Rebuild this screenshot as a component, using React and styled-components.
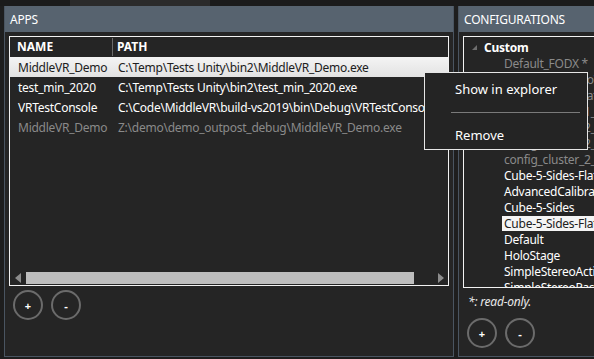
import React from "react";
import styled, { createGlobalStyle } from "styled-components";

const GlobalStyle = createGlobalStyle`
	html, body {
		margin: 0;
		padding: 0;
		background: #1e1e1e;
		overflow: hidden;
	}
	body {
		font-family: "Noto Sans", "Open Sans", sans-serif;
		font-size: 12px;
		color: #ffffff;
	}
`;

const Window = styled.div`
	position: relative;
	width: 594px;
	height: 359px;
	overflow: hidden;
	display: flex;
	flex-direction: column;
`;

const TopStrip = styled.div`
	height: 6px;
	display: flex;
	flex: none;
`;

const StripSeg = styled.div`
	width: ${p => p.w}px;
	background: ${p => p.c};
`;

const Panels = styled.div`
	display: flex;
	gap: 4px;
	padding-left: 4px;
	height: 351px;
`;

const Panel = styled.section`
	flex: none;
	width: ${p => p.w}px;
	box-sizing: border-box;
	display: flex;
	flex-direction: column;
	background: #252525;
	border: 1px solid #4a5561;
	border-top: none;
`;

const PanelHeader = styled.div`
	height: 26px;
	flex: none;
	background: #57636f;
	display: flex;
	align-items: center;
	padding-left: 5px;
	font-size: 12px;
	letter-spacing: -0.2px;
	color: #ffffff;
`;

const PanelBody = styled.div`
	padding: 4px 4px 0 4px;
	display: flex;
	flex-direction: column;
`;

const Box = styled.div`
	box-sizing: border-box;
	height: ${p => p.h}px;
	border: 1px solid #f2f2f2;
	display: flex;
	flex-direction: column;
	overflow: hidden;
`;

const HeadRow = styled.div`
	height: 20px;
	display: flex;
	align-items: center;
	font-weight: bold;
	flex: none;
`;

const HeadCell = styled.div`
	width: ${p => (p.w ? `${p.w}px` : "auto")};
	box-sizing: border-box;
	padding-left: ${p => p.pad}px;
	height: 18px;
	line-height: 18px;
	border-right: ${p => (p.divider ? "1px solid #6a6a6a" : "none")};
	white-space: nowrap;
`;

const Rows = styled.div`
	flex: 1;
	display: flex;
	flex-direction: column;
`;

const Row = styled.div`
	height: 20px;
	display: flex;
	align-items: center;
	white-space: nowrap;
	color: ${p => (p.selected ? "#202020" : p.dim ? "#8a8a8a" : "#ffffff")};
	background: ${p =>
		p.selected ? "linear-gradient(#f4f4f4, #e2e2e2)" : "transparent"};
	letter-spacing: -0.25px;
`;

const Cell = styled.div`
	width: ${p => (p.w ? `${p.w}px` : "auto")};
	box-sizing: border-box;
	padding-left: ${p => p.pad}px;
	flex: none;
`;

const HScroll = styled.div`
	height: 12px;
	margin-bottom: 1px;
	display: flex;
	align-items: center;
	padding: 0 4px 0 5px;
	gap: 5px;
`;

const Arrow = styled.div`
	width: 0;
	height: 0;
	border-top: 5px solid transparent;
	border-bottom: 5px solid transparent;
	${p =>
		p.dir === "left"
			? "border-right: 6px solid #8c8c8c;"
			: "border-left: 6px solid #8c8c8c;"}
`;

const Track = styled.div`
	flex: 1;
	height: 12px;
	display: flex;
	padding-right: 19px;
`;

const Thumb = styled.div`
	flex: 1;
	background: #bdbdbd;
`;

const ButtonRow = styled.div`
	display: flex;
	gap: 8px;
	padding-left: 4px;
	margin-top: ${p => p.top}px;
`;

const RoundButton = styled.button`
	width: 30px;
	height: 30px;
	box-sizing: border-box;
	border-radius: 50%;
	border: 2px solid #6b6b6b;
	background: transparent;
	color: #ffffff;
	font-family: "Noto Sans", sans-serif;
	font-size: 11px;
	font-weight: bold;
	padding: 0;
	display: flex;
	align-items: center;
	justify-content: center;
`;

const Tree = styled.div`
	padding-top: 2px;
	display: flex;
	flex-direction: column;
`;

const TreeRow = styled.div`
	height: 16px;
	display: flex;
	align-items: center;
	white-space: nowrap;
	padding-left: ${p => p.indent}px;
	letter-spacing: -0.25px;
	font-weight: ${p => (p.bold ? "bold" : "normal")};
	color: ${p => (p.dim ? "#8a8a8a" : "#ffffff")};
`;

const TreeLabel = styled.span`
	padding: 0 2px;
	line-height: 15px;
	background: ${p => (p.selected ? "#f4f4f4" : "transparent")};
	color: ${p => (p.selected ? "#202020" : "inherit")};
`;

const Expander = styled.span`
	width: 0;
	height: 0;
	margin-right: 7px;
	border-left: 5px solid transparent;
	border-bottom: 5px solid #6e6e6e;
`;

const Note = styled.div`
	font-style: italic;
	padding: 6px 0 0 5px;
	height: 16px;
	line-height: 16px;
	letter-spacing: -0.2px;
	color: #e8e8e8;
`;

const Menu = styled.div`
	position: absolute;
	left: 424px;
	top: 72px;
	width: 164px;
	box-sizing: border-box;
	padding: 4px 0 2px;
	background: #242424;
	border: 1px solid #e6e6e6;
	font-size: 13px;
`;

const MenuItem = styled.div`
	height: 24px;
	display: flex;
	align-items: center;
	padding-left: 30px;
	color: #ffffff;
`;

const Separator = styled.div`
	height: 1px;
	margin: 11px 7px 10px 26px;
	background: #7a7a7a;
`;

const apps = [
	{ name: "MiddleVR_Demo", path: "C:\\Temp\\Tests Unity\\bin2\\MiddleVR_Demo.exe", selected: true },
	{ name: "test_min_2020", path: "C:\\Temp\\Tests Unity\\bin2\\test_min_2020.exe" },
	{ name: "VRTestConsole", path: "C:\\Code\\MiddleVR\\build-vs2019\\bin\\Debug\\VRTestConsole.exe" },
	{ name: "MiddleVR_Demo", path: "Z:\\demo\\demo_outpost_debug\\MiddleVR_Demo.exe", dim: true }
];

const configs = [
	{ label: "Default_FODX *", dim: true },
	{ label: "Cube-5-Sides-NoWarping *", dim: true },
	{ label: "Cube-5-Sides-Flat_2w *", dim: true },
	{ label: "config_cluster_1_node *", dim: true },
	{ label: "config_cluster_2_local *", dim: true },
	{ label: "config_cluster_2_nodes *", dim: true },
	{ label: "config_cluster_2_remote *", dim: true },
	{ label: "Cube-5-Sides-Flat" },
	{ label: "AdvancedCalibration" },
	{ label: "Cube-5-Sides" },
	{ label: "Cube-5-Sides-Flat-Edge", selected: true },
	{ label: "Default" },
	{ label: "HoloStage" },
	{ label: "SimpleStereoActive" },
	{ label: "SimpleStereoPassive" }
];

export default function App() {
	return (
		<Window>
			<GlobalStyle />
			<TopStrip>
				<StripSeg w={70} c="#1b1b1b" />
				<StripSeg w={140} c="#2b2b2b" />
				<StripSeg w={384} c="#1b1b1b" />
			</TopStrip>
			<Panels>
				<Panel w={450}>
					<PanelHeader>APPS</PanelHeader>
					<PanelBody>
						<Box h={250}>
							<HeadRow>
								<HeadCell w={103} pad={7} divider>
									NAME
								</HeadCell>
								<HeadCell pad={4}>PATH</HeadCell>
							</HeadRow>
							<Rows>
								{apps.map((a, i) => (
									<Row key={i} selected={a.selected} dim={a.dim}>
										<Cell w={107} pad={8}>
											{a.name}
										</Cell>
										<Cell pad={1}>{a.path}</Cell>
									</Row>
								))}
							</Rows>
							<HScroll>
								<Arrow dir="left" />
								<Track>
									<Thumb />
								</Track>
								<Arrow dir="right" />
							</HScroll>
						</Box>
						<ButtonRow top={4}>
							<RoundButton>+</RoundButton>
							<RoundButton>-</RoundButton>
						</ButtonRow>
					</PanelBody>
				</Panel>
				<Panel w={150}>
					<PanelHeader>CONFIGURATIONS</PanelHeader>
					<PanelBody>
						<Box h={252}>
							<Tree>
								<TreeRow indent={8} bold>
									<Expander />
									Custom
								</TreeRow>
								{configs.map((c, i) => (
									<TreeRow key={i} indent={38} dim={c.dim}>
										<TreeLabel selected={c.selected}>{c.label}</TreeLabel>
									</TreeRow>
								))}
							</Tree>
						</Box>
						<Note>*: read-only.</Note>
						<ButtonRow top={8}>
							<RoundButton>+</RoundButton>
							<RoundButton>-</RoundButton>
						</ButtonRow>
					</PanelBody>
				</Panel>
			</Panels>
			<Menu>
				<MenuItem>Show in explorer</MenuItem>
				<Separator />
				<MenuItem>Remove</MenuItem>
			</Menu>
		</Window>
	);
}
